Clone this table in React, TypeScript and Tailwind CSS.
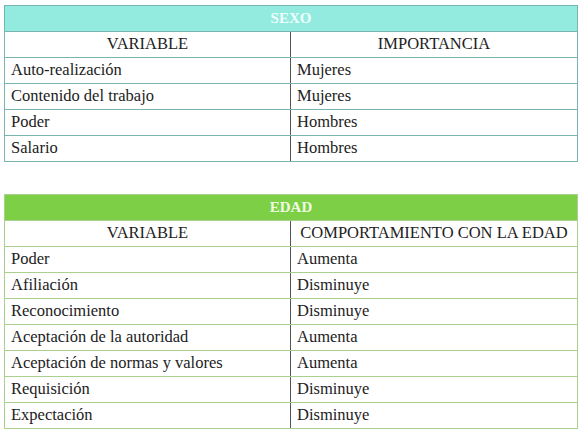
import React from 'react';

const sexo = [
  ['Auto-realización', 'Mujeres'],
  ['Contenido del trabajo', 'Mujeres'],
  ['Poder', 'Hombres'],
  ['Salario', 'Hombres'],
];

const edad = [
  ['Poder', 'Aumenta'],
  ['Afiliación', 'Disminuye'],
  ['Reconocimiento', 'Disminuye'],
  ['Aceptación de la autoridad', 'Aumenta'],
  ['Aceptación de normas y valores', 'Aumenta'],
  ['Requisición', 'Disminuye'],
  ['Expectación', 'Disminuye'],
];

type Props = {
  title: string;
  colB: string;
  rows: string[][];
  head: string;
  headText: string;
  line: string;
};

function DataTable({ title, colB, rows, head, headText, line }: Props) {
  return (
    <div className={`w-[574px] border ${line}`}>
      <div className={`h-[25px] flex items-center justify-center font-bold text-[15px] ${head} ${headText}`}>
        {title}
      </div>
      <div className={`grid grid-cols-[286px_1fr] h-[26px] border-t ${line}`}>
        <div className="flex items-center justify-center border-r border-[#555]">VARIABLE</div>
        <div className="flex items-center justify-center">{colB}</div>
      </div>
      {rows.map(([a, b]) => (
        <div key={a} className={`grid grid-cols-[286px_1fr] h-[26px] border-t ${line}`}>
          <div className="flex items-center px-[6px] border-r border-[#555]">{a}</div>
          <div className="flex items-center px-[6px]">{b}</div>
        </div>
      ))}
    </div>
  );
}

export default function App() {
  return (
    <div
      className="w-[588px] h-[436px] bg-white pl-[4px] pt-[5px] text-[16.5px] text-[#222] leading-none font-['Liberation_Serif','DejaVu_Serif','Noto_Serif','Times_New_Roman',serif]"
    >
      <DataTable
        title="SEXO"
        colB="IMPORTANCIA"
        rows={sexo}
        head="bg-[#93ebe0]"
        headText="text-[#effffc]"
        line="border-[#78b5b0]"
      />
      <div className="h-[32px]" />
      <DataTable
        title="EDAD"
        colB="COMPORTAMIENTO CON LA EDAD"
        rows={edad}
        head="bg-[#7dcf45]"
        headText="text-[#eefbe2]"
        line="border-[#a9d08e]"
      />
    </div>
  );
}
